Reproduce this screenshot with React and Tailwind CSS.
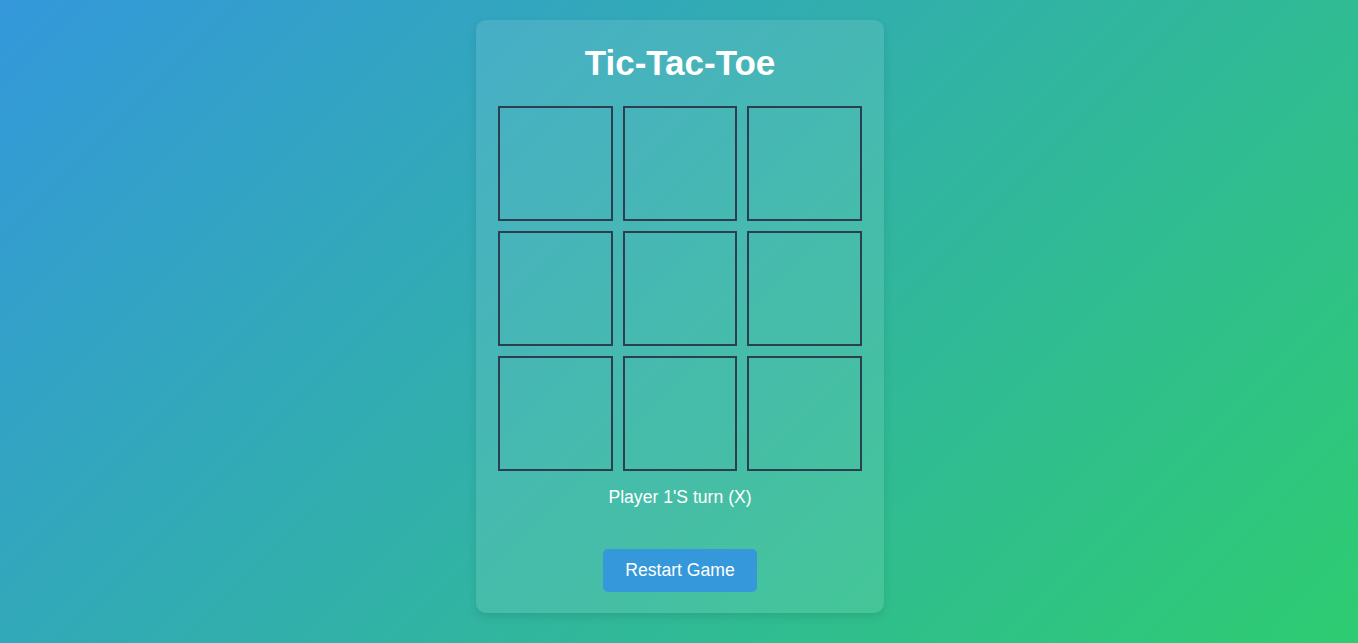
export default function App() {
  const cells = Array.from({ length: 9 });
  return (
    <div
      className="w-full h-[643px] flex justify-center items-start pt-[20px] pl-[2px] bg-[linear-gradient(135deg,#3498db,#2ecc71)]"
      style={{ fontFamily: '"Liberation Sans", Arial, sans-serif' }}
    >
      <div className="w-[408px] px-[22px] pt-[20px] pb-[21px] rounded-[10px] bg-white/10 shadow-[0_4px_10px_rgba(0,0,0,0.1)] flex flex-col items-center">
        <h1 className="text-[35px] leading-[46px] font-bold text-white m-0 mb-[20px]">Tic-Tac-Toe</h1>
        <div className="w-full grid grid-cols-3 gap-[10px]">
          {cells.map((_, i) => (
            <div key={i} className="h-[115px] border-2 border-[#2c3e50]" />
          ))}
        </div>
        <p className="mt-[16px] text-[17.6px] leading-[21px] text-white">Player 1'S turn (X)</p>
        <button className="mt-[41px] w-[154px] h-[43px] rounded-[5px] bg-[#3498db] text-white text-[17.6px] leading-[21px]">
          Restart Game
        </button>
      </div>
    </div>
  );
}
